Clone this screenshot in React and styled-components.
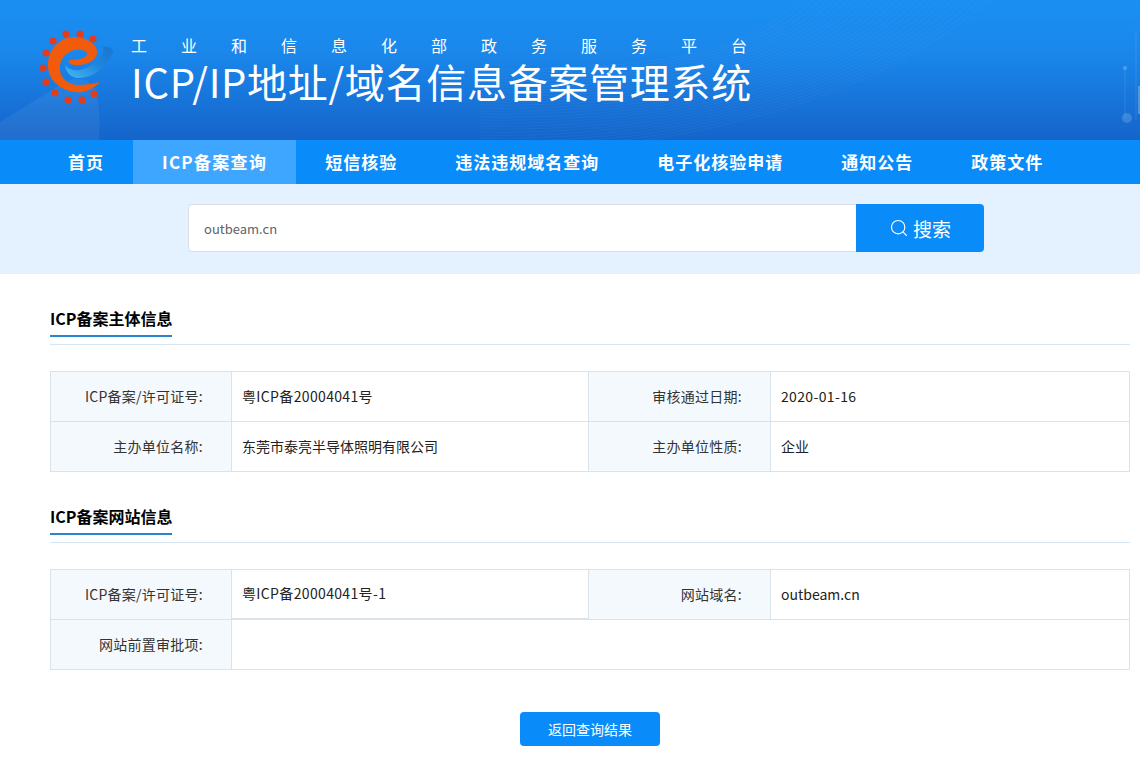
import React from "react";
import styled, {createGlobalStyle} from "styled-components";
import {Search} from "lucide-react";

const FONT = `"Noto Sans CJK SC", "Noto Sans", sans-serif`;

const navItems = ["首页", "ICP备案查询", "短信核验", "违法违规域名查询", "电子化核验申请", "通知公告", "政策文件"];
const gearDots = [
    [66, 32], [80, 32], [93, 37], [53, 39], [46, 51], [43, 66],
    [46, 80], [55, 91], [68, 98], [82, 98], [94, 92],
];
// 同心弧线的缩放比例
const waves = Array.from({length: 28}, (_, i) => 1 - i * 0.02);

const Logo = () => (
    <LogoSvg viewBox="40 25 76 78">
        <defs>
            <linearGradient id="swoosh" x1="0" y1="1" x2="1" y2="0">
                <stop offset="0" stopColor="#45b8f2"/>
                <stop offset="0.55" stopColor="#1f86dc"/>
                <stop offset="1" stopColor="#1a74d0"/>
            </linearGradient>
        </defs>
        {gearDots.map(([x, y]) => (
            <circle key={`${x}-${y}`} cx={x} cy={y} r="3.6" fill="#e23c1c"/>
        ))}
        <path d="M65 63C67 75 76 78 86 75C97 72 107 65 113 50C113 46 108 44 103 45C105 50 101 56 93 62C85 68 73 72 65 63Z" fill="url(#swoosh)"/>
        <path d="M100 80C90 90 79 92 70 89C55 85 47 74 48 61C49 46 61 35 74 35C85 35 96 41 97 49C98 58 87 63 78 63C73 63 70 63 68 59C71 57 76 58 80 57C84 56 88 54 87 51C85 47 77 47 71 49C63 53 59 60 60 68C61 77 68 82 77 83C86 83 93 82 100 80Z" fill="#f25a0c"/>
    </LogoSvg>
);

// 头部背景的弧线装饰
const HeaderDecor = () => (
    <Decor viewBox="0 0 1140 140" preserveAspectRatio="none">
        <path d="M0 122L60 85C75 75 92 78 96 92C100 108 100 125 99 140H0Z" fill="#ffffff" opacity="0.06"/>
        {waves.map((k) => (
            <path
                key={k}
                d={`M480 ${150 * k}C700 ${155 * k} ${640 + 260 * k} ${85 * k} ${640 + 347 * k} 0`}
                fill="none"
                stroke="#ffffff"
                strokeWidth="0.6"
                opacity="0.07"
            />
        ))}
        <path d="M1136 30V120" stroke="#ffffff" strokeWidth="0.8" opacity="0.12"/>
        <path d="M1125 68V118" stroke="#ffffff" strokeWidth="0.8" opacity="0.12"/>
        <circle cx="1125" cy="68" r="2" fill="#ffffff" opacity="0.22"/>
        <circle cx="1127" cy="118" r="5" fill="#ffffff" opacity="0.16"/>
        <rect x="1138" y="86" width="2" height="28" fill="#ffffff" opacity="0.25"/>
    </Decor>
);

const App = () => {
    return (
        <Page>
            <GlobalStyle/>
            <Header>
                <HeaderDecor/>
                <Logo/>
                <TitleBlock>
                    <SubTitle>工业和信息化部政务服务平台</SubTitle>
                    <MainTitle>ICP/IP地址/域名信息备案管理系统</MainTitle>
                </TitleBlock>
            </Header>

            <Nav>
                {navItems.map((item, index) => (
                    <NavItem key={item} $active={index === 1}>{item}</NavItem>
                ))}
            </Nav>

            <SearchBand>
                <SearchInput defaultValue="outbeam.cn"/>
                <SearchButton type="button">
                    <Search size={20} strokeWidth={1.4}/>
                    搜索
                </SearchButton>
            </SearchBand>

            <Main>
                <SectionHead>
                    <SectionTitle>ICP备案主体信息</SectionTitle>
                </SectionHead>
                <Table>
                    <LabelCell>ICP备案/许可证号:</LabelCell>
                    <ValueCell $spaced>粤ICP备20004041号</ValueCell>
                    <LabelCell>审核通过日期:</LabelCell>
                    <ValueCell $spaced>2020-01-16</ValueCell>
                    <LabelCell>主办单位名称:</LabelCell>
                    <ValueCell>东莞市泰亮半导体照明有限公司</ValueCell>
                    <LabelCell>主办单位性质:</LabelCell>
                    <ValueCell>企业</ValueCell>
                </Table>

                <SectionHead $second>
                    <SectionTitle>ICP备案网站信息</SectionTitle>
                </SectionHead>
                <Table>
                    <LabelCell>ICP备案/许可证号:</LabelCell>
                    <ValueCell $spaced $thick>粤ICP备20004041号-1</ValueCell>
                    <LabelCell>网站域名:</LabelCell>
                    <ValueCell>outbeam.cn</ValueCell>
                    <LabelCell>网站前置审批项:</LabelCell>
                    <ValueCell $wide/>
                </Table>

                <BackRow>
                    <BackButton type="button">返回查询结果</BackButton>
                </BackRow>
            </Main>
        </Page>
    );
};

export default App;

// Styled Components
const GlobalStyle = createGlobalStyle`
    html, body {
        margin: 0;
        padding: 0;
        background: #fff;
        font-family: ${FONT};
        overflow: hidden;
    }
    * {
        box-sizing: border-box;
    }
`;

const Page = styled.div`
    width: 1140px;
    height: 772px;
`;

const Header = styled.header`
    position: relative;
    height: 140px;
    padding: 27px 0 0 40px;
    display: flex;
    align-items: flex-start;
    gap: 15px;
    overflow: hidden;
    background: linear-gradient(180deg, #1a90f3 0%, #1a86ea 40%, #1564ca 100%);
`;

const Decor = styled.svg`
    position: absolute;
    left: 0;
    top: 0;
    width: 100%;
    height: 100%;
`;

const LogoSvg = styled.svg`
    position: relative;
    width: 76px;
    height: 78px;
    flex: none;
`;

const TitleBlock = styled.div`
    position: relative;
    color: #fff;
`;

const SubTitle = styled.div`
    font-size: 16px;
    line-height: 20px;
    margin-top: 8px;
    letter-spacing: 34px;
    white-space: nowrap;
`;

const MainTitle = styled.h1`
    margin: 0;
    font-size: 40px;
    font-weight: 400;
    line-height: 52px;
    letter-spacing: 0.7px;
    white-space: nowrap;
`;

const Nav = styled.nav`
    height: 44px;
    padding-left: 39px;
    display: flex;
    background: #0a8bfa;
`;

const NavItem = styled.div`
    padding: 0 29px;
    line-height: 43px;
    color: #fff;
    font-size: 17px;
    font-weight: 700;
    letter-spacing: ${(p) => (p.$active ? "1.3px" : "1px")};
    white-space: nowrap;
    background: ${(p) => (p.$active ? "#3ea6ff" : "transparent")};
`;

const SearchBand = styled.div`
    height: 90px;
    padding: 20px 0 0 188px;
    display: flex;
    align-items: flex-start;
    background: #e4f1fe;
`;

const SearchInput = styled.input`
    width: 668px;
    height: 48px;
    padding: 0 15px;
    border: 1px solid #dcdfe6;
    border-right: none;
    border-radius: 4px 0 0 4px;
    outline: none;
    background: #fff;
    color: #606266;
    font-family: ${FONT};
    font-size: 13px;
`;

const SearchButton = styled.button`
    width: 128px;
    height: 48px;
    display: flex;
    align-items: center;
    justify-content: center;
    gap: 4px;
    border: none;
    border-radius: 0 4px 4px 0;
    background: #0a8bfa;
    color: #fff;
    font-family: ${FONT};
    font-size: 19px;
    cursor: pointer;
`;

const Main = styled.main`
    padding: 32px 10px 0 50px;
`;

const SectionHead = styled.div`
    margin-top: ${(p) => (p.$second ? "32px" : "0")};
    padding-bottom: 7px;
    border-bottom: 1px solid #d5e5f2;
`;

const SectionTitle = styled.h2`
    display: inline-block;
    margin: 0;
    padding-bottom: 5px;
    border-bottom: 2px solid #2a85d0;
    color: #000;
    font-size: 16px;
    font-weight: 700;
    line-height: 24px;
    vertical-align: top;
`;

const Table = styled.div`
    margin-top: 26px;
    display: grid;
    grid-template-columns: 181px 357px 182px 359px;
    grid-auto-rows: 50px;
    border-top: 1px solid #dbe3ea;
    border-left: 1px solid #dbe3ea;
`;

const LabelCell = styled.div`
    padding: 0 28px 2px 0;
    display: flex;
    align-items: center;
    justify-content: flex-end;
    border-right: 1px solid #dbe3ea;
    border-bottom: 1px solid #dbe3ea;
    background: #f4f9fe;
    color: #333;
    font-size: 14px;
    letter-spacing: 0.25px;
    white-space: nowrap;
`;

const ValueCell = styled.div`
    grid-column: ${(p) => (p.$wide ? "span 3" : "auto")};
    padding: 0 0 2px 10px;
    display: flex;
    align-items: center;
    border-right: 1px solid #dbe3ea;
    border-bottom: ${(p) => (p.$thick ? "2px" : "1px")} solid #dbe3ea;
    color: #222;
    font-size: 14px;
    letter-spacing: ${(p) => (p.$spaced ? "0.35px" : "0")};
    white-space: nowrap;
`;

const BackRow = styled.div`
    margin-top: 42px;
    display: flex;
    justify-content: center;
`;

const BackButton = styled.button`
    width: 140px;
    height: 34px;
    border: none;
    border-radius: 4px;
    background: #0a8bfa;
    color: #fff;
    font-family: ${FONT};
    font-size: 14px;
    cursor: pointer;
`;
